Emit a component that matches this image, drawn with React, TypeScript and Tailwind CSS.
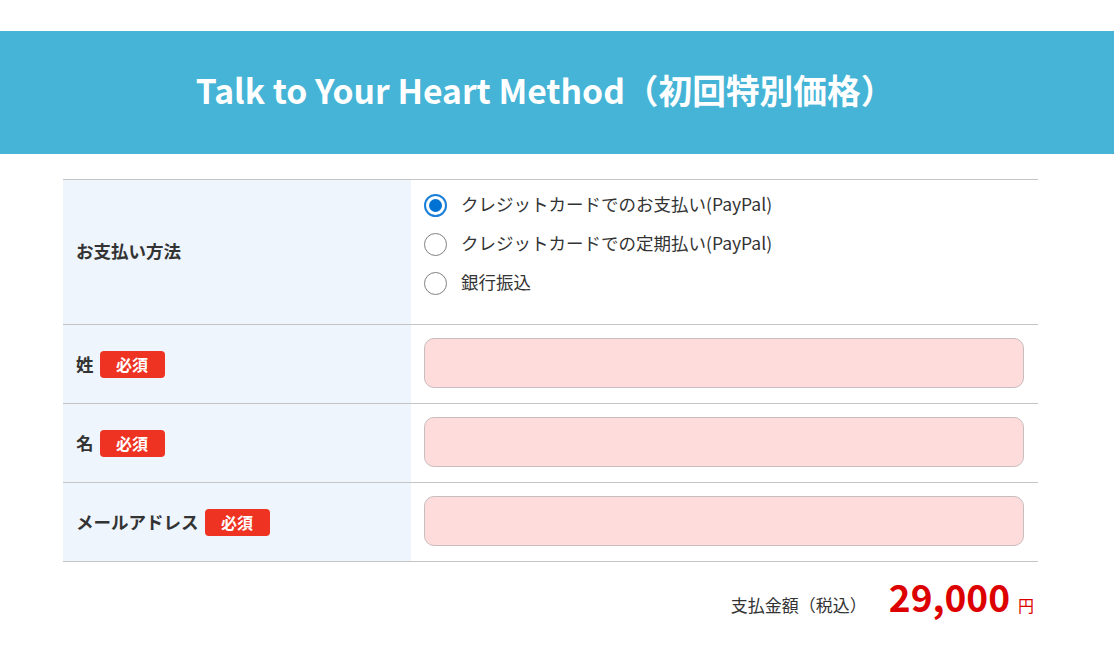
const FONT = "font-['Noto_Sans_CJK_JP','Noto_Sans',sans-serif]";

const PAYMENT_OPTIONS = [
  "クレジットカードでのお支払い(PayPal)",
  "クレジットカードでの定期払い(PayPal)",
  "銀行振込",
];

function Radio({ checked }: { checked: boolean }) {
  return checked ? (
    <span className="w-[23px] h-[23px] rounded-full border-2 border-[#1a7fd8] flex items-center justify-center shrink-0">
      <span className="w-[13px] h-[13px] rounded-full bg-[#0072d3]" />
    </span>
  ) : (
    <span className="w-[23px] h-[23px] rounded-full border-[1.5px] border-[#808080] bg-white shrink-0" />
  );
}

function Required() {
  return (
    <span className="ml-[6px] inline-flex items-center justify-center w-[65px] h-[27px] rounded-[4px] bg-[#ee3322] text-white text-[16px] font-bold leading-none">
      必須
    </span>
  );
}

function InputRow({ label }: { label: string }) {
  return (
    <div className="flex border-b border-[#c4c4c4]">
      <div className="w-[348px] bg-[#eef5fc] pl-[13px] flex items-center text-[17.5px] font-bold text-[#333]">
        {label}
        <Required />
      </div>
      <div className="flex-1 pl-[13px] pr-[14px] pt-[13px] pb-[15px]">
        <div className="h-[50px] rounded-[10px] bg-[#ffdcdc] border border-[#c9bcbc]" />
      </div>
    </div>
  );
}

export default function App() {
  return (
    <div className={`${FONT} bg-white min-h-[669px] pt-[31px]`}>
      <div className="h-[123px] bg-[#45b4d6] flex items-center justify-center pb-[5px] pr-[24px]">
        <h1 className="text-white text-[33.7px] font-bold leading-none">Talk to Your Heart Method（初回特別価格）</h1>
      </div>

      <div className="mx-[63px] w-[975px] mt-[25px] border-t border-[#c4c4c4]">
        <div className="flex border-b border-[#c4c4c4]">
          <div className="w-[348px] bg-[#eef5fc] pl-[13px] flex items-center text-[17.5px] font-bold text-[#333] pb-[2px]">
            お支払い方法
          </div>
          <div className="flex-1 pl-[13px] pt-[6px] pb-[21px]">
            {PAYMENT_OPTIONS.map((opt, i) => (
              <label key={opt} className="h-[39px] flex items-center gap-[14px] text-[17.5px] text-[#333]">
                <Radio checked={i === 0} />
                <span className="pb-[2px]">{opt}</span>
              </label>
            ))}
          </div>
        </div>
        <InputRow label="姓" />
        <InputRow label="名" />
        <InputRow label="メールアドレス" />

        <div className="flex items-baseline justify-end pr-[4px] pt-[16px] text-[#333]">
          <span className="text-[17px]">支払金額（税込）</span>
          <span className="ml-[22px] text-[37px] font-bold text-[#dd0000] leading-none">29,000</span>
          <span className="ml-[8px] text-[16px] text-[#dd0000]">円</span>
        </div>
      </div>
    </div>
  );
}
